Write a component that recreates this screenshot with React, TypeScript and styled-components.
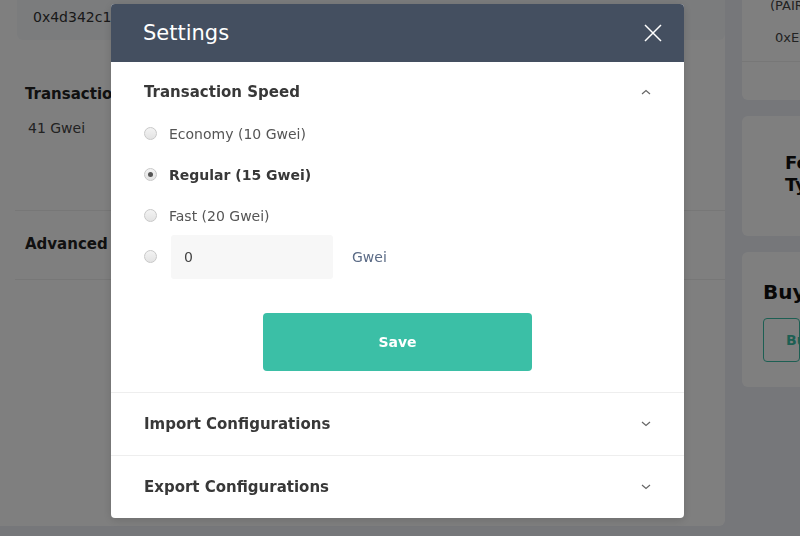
import styled, { createGlobalStyle } from "styled-components";

const GlobalStyle = createGlobalStyle`
  html, body {
    margin: 0;
    padding: 0;
    height: 100%;
    overflow: hidden;
    background: #eceef5;
    font-family: "DejaVu Sans", "Open Sans", sans-serif;
  }
`;

const Page = styled.div`
  display: flex;
  gap: 17px;
  margin-top: -20px;
  height: 546px;
`;

const MainCard = styled.div`
  flex: 0 0 725px;
  background: #fff;
  border-radius: 0 0 6px 0;
  padding: 0 0 0 15px;
  box-sizing: border-box;
`;

const AddressBox = styled.div`
  margin-left: 2px;
  height: 60px;
  background: #f7f8fb;
  border-radius: 0 0 6px 6px;
  padding: 29px 0 0 16px;
  box-sizing: border-box;
  font-size: 14px;
  color: #333;
`;

const Block = styled.div<{ $h: number; $pt: number }>`
  height: ${(p) => p.$h}px;
  padding: ${(p) => p.$pt}px 0 0 10px;
  border-bottom: 1px solid #eee;
  box-sizing: border-box;
`;

const BlockTitle = styled.div`
  font-size: 15px;
  font-weight: 700;
  color: #222;
`;

const BlockValue = styled.div`
  margin-top: 17px;
  padding-left: 3px;
  font-size: 14px;
  color: #444;
`;

const Side = styled.div`
  flex: 1;
  display: flex;
  flex-direction: column;
  gap: 16px;
  overflow: hidden;
`;

const SideCard = styled.div<{ $h: number }>`
  height: ${(p) => p.$h}px;
  background: #fff;
  border-radius: 6px 0 0 6px;
  box-sizing: border-box;
  white-space: nowrap;
`;

const SmallLine = styled.div<{ $top: number; $left: number }>`
  padding: ${(p) => p.$top}px 0 0 ${(p) => p.$left}px;
  font-size: 13px;
  color: #444;
`;

const SideDivider = styled.div`
  margin-top: 16px;
  border-top: 1px solid #eee;
`;

const Feature = styled.div`
  padding: 36px 0 0 43px;
  font-size: 18px;
  font-weight: 700;
  color: #111;
  line-height: 22px;
`;

const BuyTitle = styled.div`
  padding: 28px 0 0 21px;
  font-size: 20px;
  font-weight: 600;
  color: #111;
`;

const OutlineButton = styled.div`
  margin: 14px 0 0 21px;
  height: 42px;
  border: 1px solid #3bbfa6;
  border-radius: 4px;
  padding-left: 22px;
  display: flex;
  align-items: center;
  color: #3bbfa6;
  font-size: 14px;
  font-weight: 600;
`;

const Overlay = styled.div`
  position: fixed;
  inset: 0;
  background: rgba(0, 0, 0, 0.5);
`;

const Modal = styled.div`
  margin: 4px 0 0 111px;
  width: 573px;
  background: #fff;
  border-radius: 4px;
  overflow: hidden;
  box-shadow: 0 2px 10px rgba(0, 0, 0, 0.15);
`;

const ModalHeader = styled.div`
  height: 58px;
  background: #444f60;
  display: flex;
  align-items: center;
  justify-content: space-between;
  padding: 0 21px 0 32px;
  color: #fff;
  font-size: 21px;
`;

const SectionHeader = styled.div<{ $h: number; $pt?: number }>`
  height: ${(p) => p.$h}px;
  padding: ${(p) => p.$pt || 0}px 33px 0 33px;
  box-sizing: border-box;
  display: flex;
  align-items: center;
  justify-content: space-between;
  font-size: 15px;
  font-weight: 600;
  color: #383838;
`;

const Item = styled.div`
  border-top: 1px solid #eee;
`;

const Options = styled.div`
  padding: 0 33px;
`;

const OptionRow = styled.label`
  height: 41px;
  display: flex;
  align-items: center;
  gap: 12px;
`;

const Radio = styled.span<{ $on?: boolean }>`
  width: 11px;
  height: 11px;
  border-radius: 50%;
  border: 1px solid #c8c8c8;
  background: linear-gradient(#f3f3f3, #e3e3e3);
  display: flex;
  align-items: center;
  justify-content: center;
  flex: 0 0 auto;
  &::after {
    content: "";
    display: ${(p) => (p.$on ? "block" : "none")};
    width: 5px;
    height: 5px;
    border-radius: 50%;
    background: #555;
  }
`;

const OptionText = styled.span<{ $on?: boolean }>`
  font-size: 14px;
  color: ${(p) => (p.$on ? "#383838" : "#555")};
  font-weight: ${(p) => (p.$on ? 700 : 400)};
`;

const CustomField = styled.span`
  margin-left: 2px;
  display: flex;
  align-items: center;
`;

const GweiInput = styled.input`
  width: 162px;
  height: 44px;
  box-sizing: border-box;
  border: none;
  border-radius: 3px;
  background: #f7f7f7;
  padding: 0 13px;
  font-family: inherit;
  font-size: 14px;
  color: #444;
  outline: none;
`;

const Unit = styled.span`
  margin-left: 19px;
  font-size: 14px;
  color: #5b6b86;
`;

const SaveWrap = styled.div`
  display: flex;
  justify-content: center;
  padding: 36px 0 21px;
`;

const SaveButton = styled.button`
  width: 269px;
  height: 58px;
  border: none;
  border-radius: 4px;
  background: #3bbfa6;
  color: #fff;
  font-family: inherit;
  font-size: 14px;
  font-weight: 600;
`;

const Chevron = ({ up }: { up?: boolean }) => (
  <svg width="10" height="6" viewBox="0 0 10 6">
    <polyline
      points={up ? "1,5 5,1.5 9,5" : "1,1 5,4.5 9,1"}
      fill="none"
      stroke="#666"
      strokeWidth="1.2"
    />
  </svg>
);

const CloseIcon = () => (
  <svg width="20" height="20" viewBox="0 0 20 20">
    <path d="M2 2 L18 18 M18 2 L2 18" stroke="#fff" strokeWidth="1.5" />
  </svg>
);

const options = [
  { label: "Economy (10 Gwei)", on: false },
  { label: "Regular (15 Gwei)", on: true },
  { label: "Fast (20 Gwei)", on: false },
];

export default function App() {
  return (
    <>
      <GlobalStyle />
      <Page>
        <MainCard>
          <AddressBox>0x4d342c1a9b2e7f</AddressBox>
          <Block $h={171} $pt={45}>
            <BlockTitle>Transaction Speed</BlockTitle>
            <BlockValue>41 Gwei</BlockValue>
          </Block>
          <Block $h={69} $pt={24}>
            <BlockTitle>Advanced</BlockTitle>
          </Block>
        </MainCard>
        <Side>
          <SideCard $h={120}>
            <SmallLine $top={18} $left={28}>(PAIR)</SmallLine>
            <SmallLine $top={17} $left={33}>0xE2f1</SmallLine>
            <SideDivider />
          </SideCard>
          <SideCard $h={120}>
            <Feature>
              Fo
              <br />
              Ty
            </Feature>
          </SideCard>
          <SideCard $h={135}>
            <BuyTitle>Buy</BuyTitle>
            <OutlineButton>Buy</OutlineButton>
          </SideCard>
        </Side>
      </Page>
      <Overlay>
        <Modal>
          <ModalHeader>
            <span>Settings</span>
            <CloseIcon />
          </ModalHeader>
          <SectionHeader $h={51} $pt={9}>
            <span>Transaction Speed</span>
            <Chevron up />
          </SectionHeader>
          <Options>
            {options.map((o) => (
              <OptionRow key={o.label}>
                <Radio $on={o.on} />
                <OptionText $on={o.on}>{o.label}</OptionText>
              </OptionRow>
            ))}
            <OptionRow>
              <Radio />
              <CustomField>
                <GweiInput defaultValue="0" />
                <Unit>Gwei</Unit>
              </CustomField>
            </OptionRow>
          </Options>
          <SaveWrap>
            <SaveButton>Save</SaveButton>
          </SaveWrap>
          <Item>
            <SectionHeader $h={62}>
              <span>Import Configurations</span>
              <Chevron />
            </SectionHeader>
          </Item>
          <Item>
            <SectionHeader $h={62}>
              <span>Export Configurations</span>
              <Chevron />
            </SectionHeader>
          </Item>
        </Modal>
      </Overlay>
    </>
  );
}
